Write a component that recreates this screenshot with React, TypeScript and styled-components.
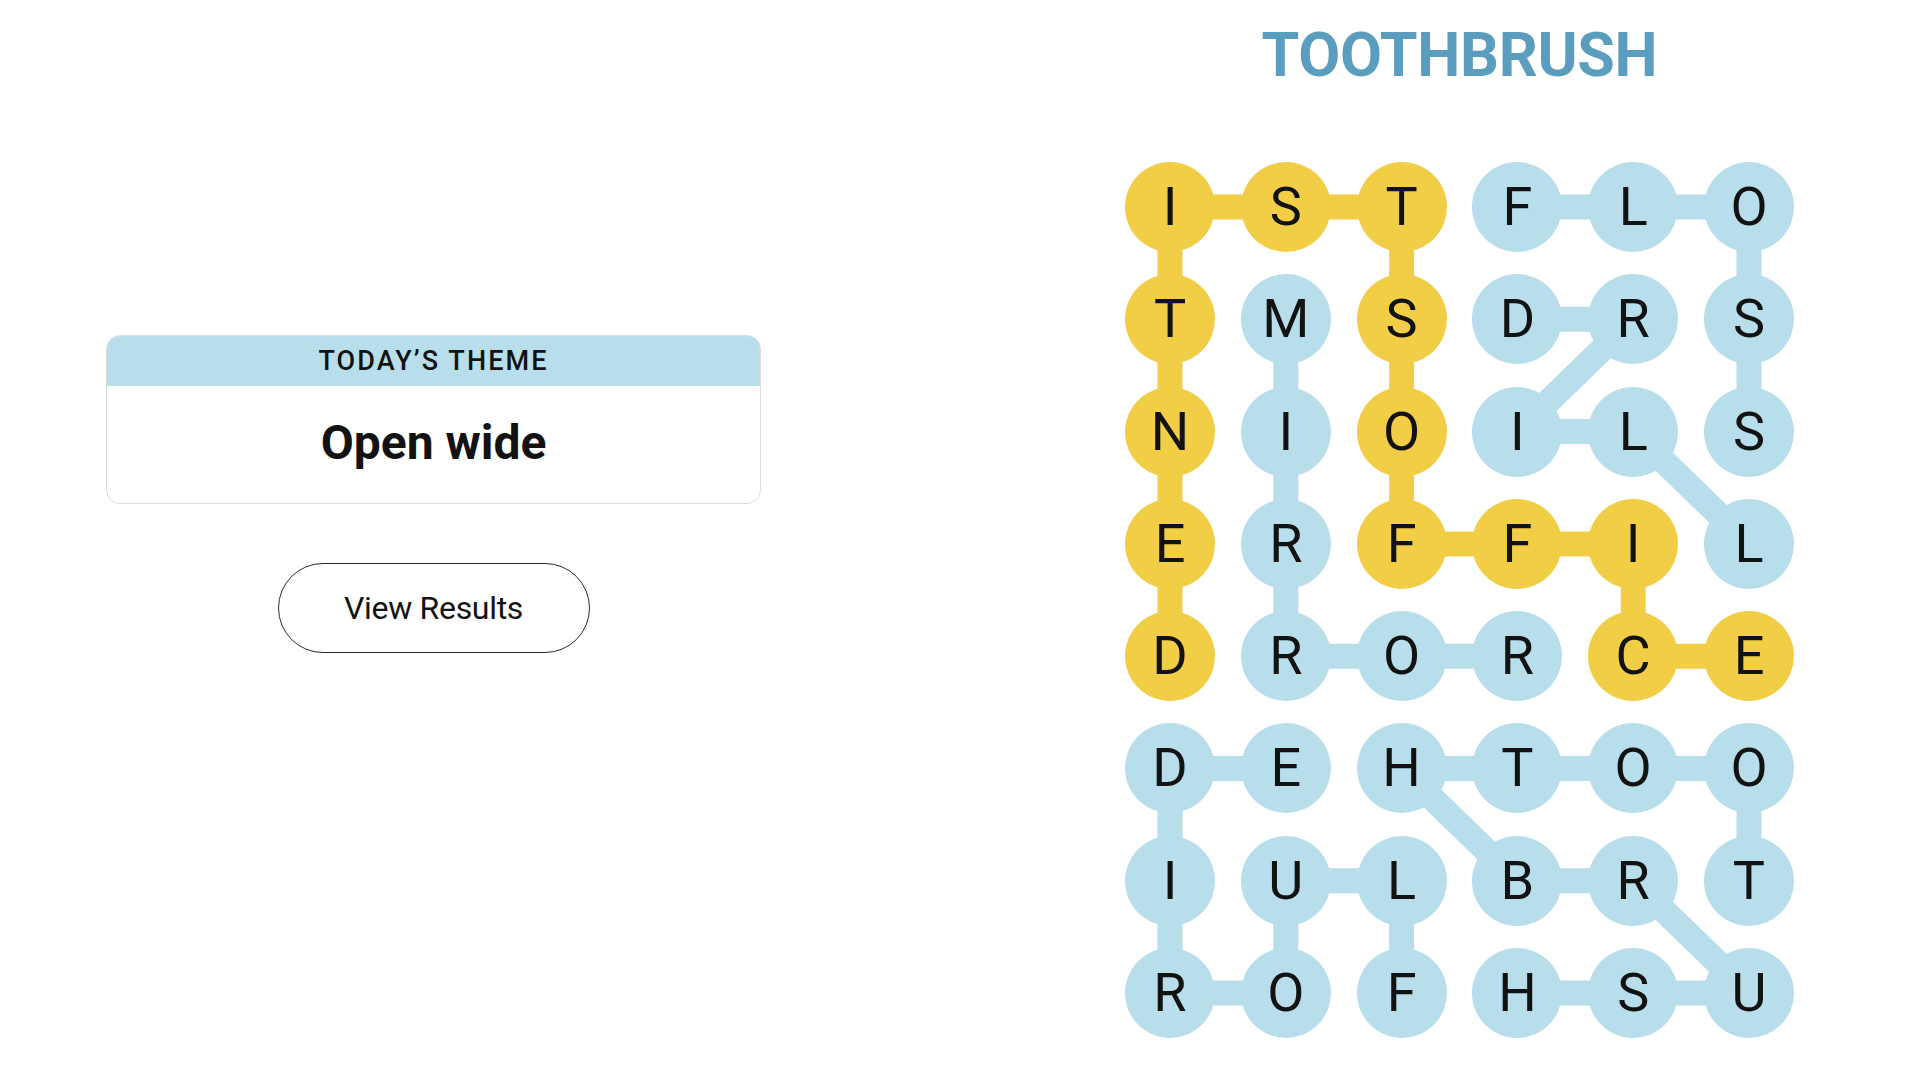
import React from 'react';
import styled, { createGlobalStyle } from 'styled-components';

const BLUE = '#b8deeb';
const YELLOW = '#f1ce46';

const CELL = 90;
const COL_GAP = 25.8;
const ROW_GAP = 22.3;

const letters = ['ISTFLO', 'TMSDRS', 'NIOILS', 'ERFFIL', 'DRORCE', 'DEHTOO', 'IULBRT', 'ROFHSU'];

type Kind = 'spangram' | 'theme';

const words: { kind: Kind; path: [number, number][] }[] = [
    {
        kind: 'spangram',
        path: [[4, 0], [3, 0], [2, 0], [1, 0], [0, 0], [0, 1], [0, 2], [1, 2], [2, 2], [3, 2], [3, 3], [3, 4], [4, 4], [4, 5]],
    },
    { kind: 'theme', path: [[0, 3], [0, 4], [0, 5], [1, 5], [2, 5]] },
    { kind: 'theme', path: [[1, 3], [1, 4], [2, 3], [2, 4], [3, 5]] },
    { kind: 'theme', path: [[1, 1], [2, 1], [3, 1], [4, 1], [4, 2], [4, 3]] },
    { kind: 'theme', path: [[6, 5], [5, 5], [5, 4], [5, 3], [5, 2], [6, 3], [6, 4], [7, 5], [7, 4], [7, 3]] },
    { kind: 'theme', path: [[7, 2], [6, 2], [6, 1], [7, 1], [7, 0], [6, 0], [5, 0], [5, 1]] },
];

const GlobalStyle = createGlobalStyle`
    body {
        margin: 0;
        background: #fff;
        font-family: Roboto, "Liberation Sans", sans-serif;
        color: #121212;
    }
`;

const Page = styled.main`
    width: 1920px;
    height: 1080px;
    display: flex;
    justify-content: space-between;
    padding: 0 126px 0 106px;
    box-sizing: border-box;
    overflow: hidden;
`;

const Sidebar = styled.section`
    width: 655px;
    padding-top: 335px;
    display: flex;
    flex-direction: column;
    align-items: center;
`;

const ThemeCard = styled.div`
    width: 100%;
    border: 1px solid #dcdcdc;
    border-radius: 14px;
    overflow: hidden;
    box-sizing: border-box;
`;

const ThemeHeader = styled.div`
    height: 50px;
    background: ${BLUE};
    display: flex;
    align-items: center;
    justify-content: center;
    font-size: 27px;
    font-weight: 500;
    letter-spacing: 2.1px;
    text-transform: uppercase;
`;

const ThemeBody = styled.div`
    height: 117px;
    display: flex;
    align-items: center;
    justify-content: center;
    font-size: 48px;
    font-weight: 700;
    padding-bottom: 4px;
    box-sizing: border-box;
`;

const ResultsButton = styled.button`
    margin-top: 59px;
    width: 312px;
    height: 90px;
    border: 1.5px solid #2a2a2a;
    border-radius: 45px;
    background: #fff;
    font-family: Roboto, "Liberation Sans", sans-serif;
    font-size: 32px;
    letter-spacing: -0.3px;
    color: #121212;
    cursor: pointer;
`;

const Board = styled.section`
    width: ${CELL * 6 + COL_GAP * 5}px;
    padding-top: 25px;
    display: flex;
    flex-direction: column;
    align-items: center;
`;

const Title = styled.h1`
    margin: 0;
    font-size: 61px;
    line-height: 61px;
    font-weight: 700;
    letter-spacing: -0.3px;
    color: #5a9dbe;
`;

const Grid = styled.div`
    position: relative;
    margin-top: 76px;
    display: grid;
    grid-template-columns: repeat(6, ${CELL}px);
    grid-auto-rows: ${CELL}px;
    column-gap: ${COL_GAP}px;
    row-gap: ${ROW_GAP}px;
`;

const Links = styled.svg`
    position: absolute;
    inset: 0;
    width: 100%;
    height: 100%;
    z-index: 0;
`;

const Cell = styled.div<{ $kind: Kind }>`
    position: relative;
    z-index: 1;
    width: ${CELL}px;
    height: ${CELL}px;
    border-radius: 50%;
    background: ${(p) => (p.$kind === 'spangram' ? YELLOW : BLUE)};
    display: flex;
    align-items: center;
    justify-content: center;
    font-size: 54px;
    line-height: 54px;
    font-weight: 400;
    color: #121212;
`;

const center = ([r, c]: [number, number]) => ({
    x: CELL / 2 + c * (CELL + COL_GAP),
    y: CELL / 2 + r * (CELL + ROW_GAP),
});

const kindAt = (r: number, c: number): Kind =>
    words.find((w) => w.path.some(([wr, wc]) => wr === r && wc === c))?.kind ?? 'theme';

const App = () => {
    const width = CELL * 6 + COL_GAP * 5;
    const height = CELL * 8 + ROW_GAP * 7;

    return (
        <>
            <GlobalStyle />
            <Page>
                <Sidebar>
                    <ThemeCard>
                        <ThemeHeader>Today’s Theme</ThemeHeader>
                        <ThemeBody>Open wide</ThemeBody>
                    </ThemeCard>
                    <ResultsButton type="button">View Results</ResultsButton>
                </Sidebar>

                <Board>
                    <Title>TOOTHBRUSH</Title>
                    <Grid>
                        <Links viewBox={`0 0 ${width} ${height}`}>
                            {words.map((w, i) =>
                                w.path.slice(1).map((cell, j) => {
                                    const a = center(w.path[j]);
                                    const b = center(cell);
                                    return (
                                        <line
                                            key={`${i}-${j}`}
                                            x1={a.x}
                                            y1={a.y}
                                            x2={b.x}
                                            y2={b.y}
                                            stroke={w.kind === 'spangram' ? YELLOW : BLUE}
                                            strokeWidth={25}
                                        />
                                    );
                                })
                            )}
                        </Links>
                        {letters.map((row, r) =>
                            row.split('').map((ch, c) => (
                                <Cell key={`${r}-${c}`} $kind={kindAt(r, c)}>
                                    {ch}
                                </Cell>
                            ))
                        )}
                    </Grid>
                </Board>
            </Page>
        </>
    );
};

export default App;
